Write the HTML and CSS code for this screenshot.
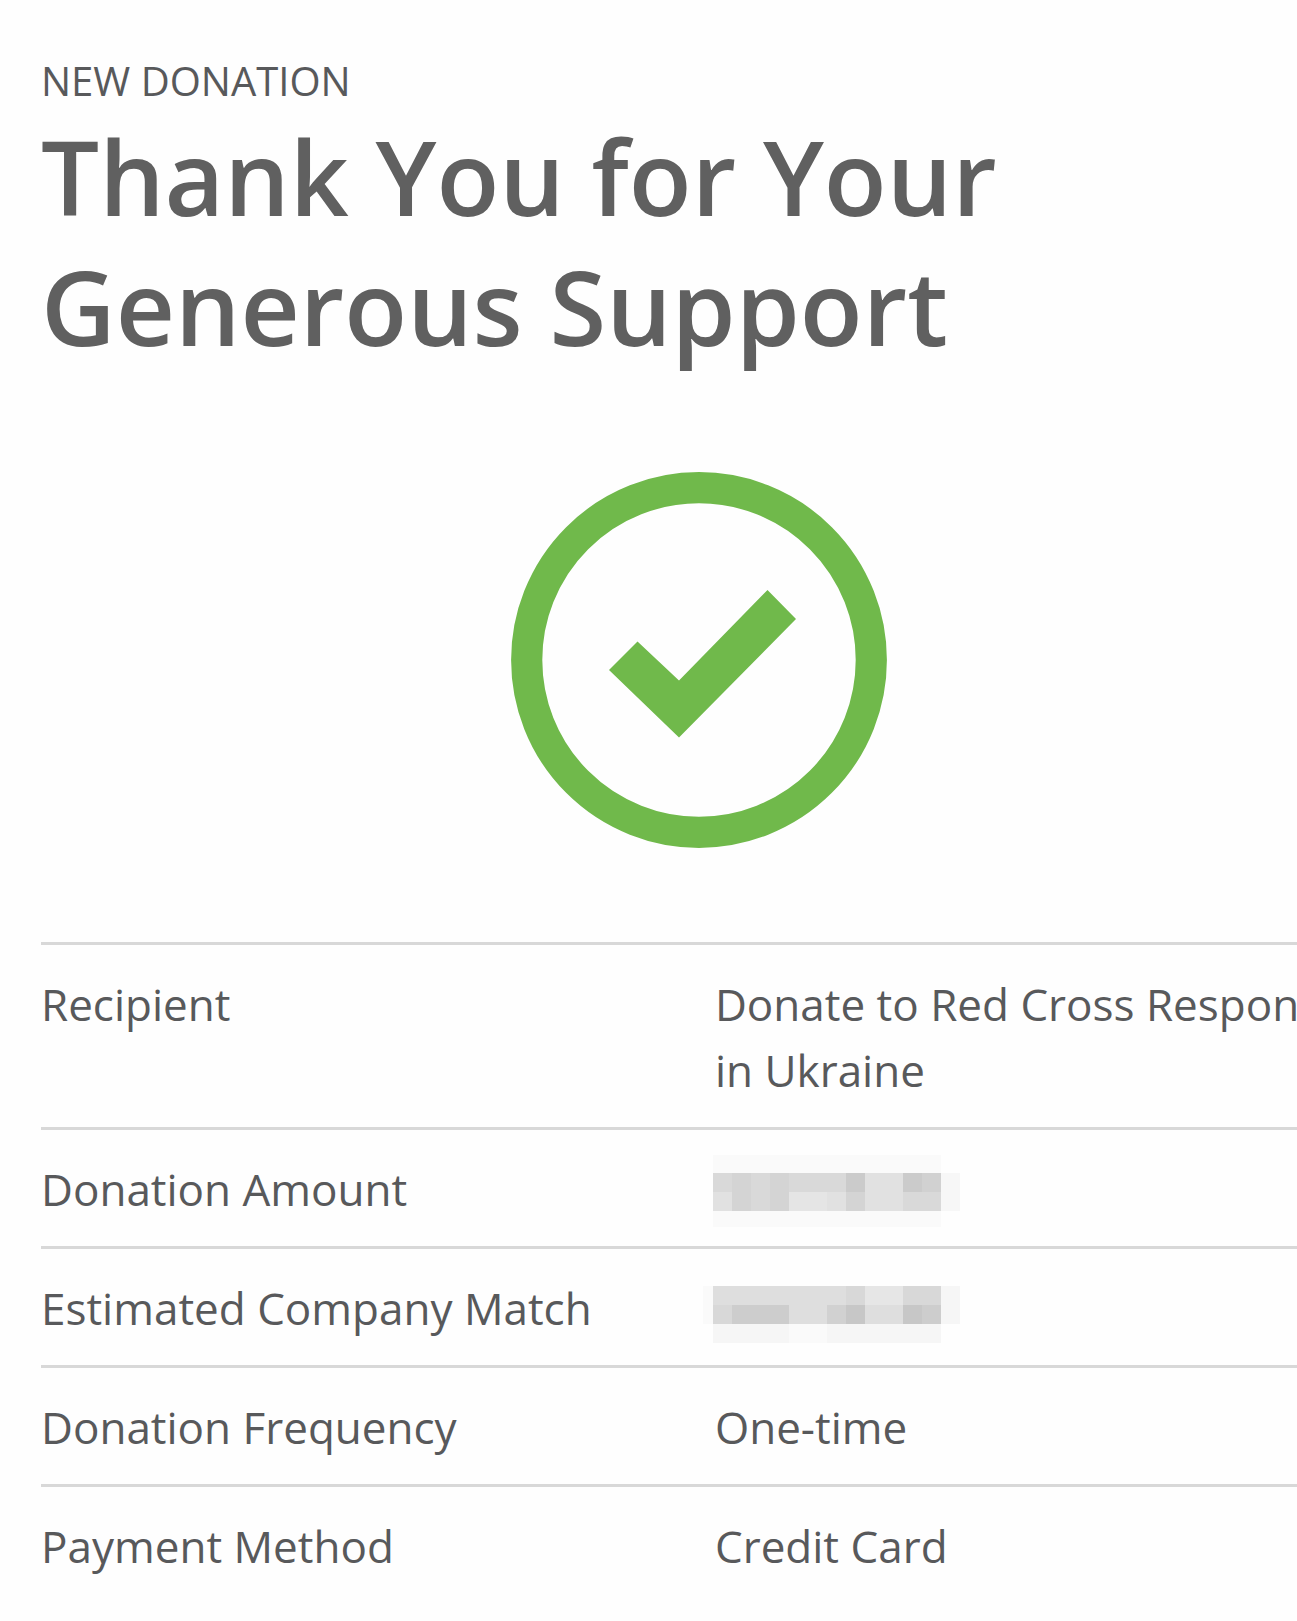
FILE: index.html
```html
<!DOCTYPE html>
<html lang="en">
<head>
<meta charset="utf-8">
<meta name="viewport" content="width=device-width, initial-scale=1">
<title>New Donation</title>
<link rel="stylesheet" href="styles.css">
</head>
<body>
<main class="receipt">
  <header class="receipt-header">
    <p class="eyebrow">NEW DONATION</p>
    <h1 class="title">Thank You for Your<br>Generous Support</h1>
  </header>
  <svg class="success-icon" viewBox="0 0 376 376" role="img" aria-label="Success">
    <circle cx="188" cy="188" r="172.3" fill="none" stroke="currentColor" stroke-width="31.2"/>
    <path fill="currentColor" d="M98 198 126.500 169.500 168 208.500 256.500 118 285 147 168 265.500Z"/>
  </svg>
  <table class="details">
    <tbody>
      <tr>
        <th scope="row">Recipient</th>
        <td>Donate to Red Cross Response in Ukraine</td>
      </tr>
      <tr>
        <th scope="row">Donation Amount</th>
        <td>
          <svg class="redacted" viewBox="0 0 247 66" role="img" aria-label="Hidden amount" shape-rendering="crispEdges">
            <path fill="#fafafa" d="M-2 -1H226V17H-2ZM-2 55H226V71H-2Z"/>
            <path fill="#f7f7f7" d="M226 17H245V55H226Z"/>
            <path fill="#d9d9d9" d="M-2 17H226V55H-2Z"/>
            <path fill="#e1e1e1" d="M-2 36H17V55H-2ZM112 36H131V55H112ZM150 17H188V55H150Z"/>
            <path fill="#e5e5e5" d="M74 36H112V55H74Z"/>
            <path fill="#d4d4d4" d="M17 17H36V55H17ZM55 17H74V55H55ZM131 36H150V55H131Z"/>
            <path fill="#cbcbcb" d="M131 17H150V36H131ZM188 17H207V36H188Z"/>
            <path fill="#d1d1d1" d="M207 17H226V36H207Z"/>
          </svg>
        </td>
      </tr>
      <tr>
        <th scope="row">Estimated Company Match</th>
        <td>
          <svg class="redacted" viewBox="0 0 247 66" role="img" aria-label="Hidden amount" shape-rendering="crispEdges">
            <path fill="#fafafa" d="M-12 11H-2V49H-12Z"/>
            <path fill="#f6f6f6" d="M-2 49H226V68H-2ZM226 11H245V49H226Z"/>
            <path fill="#fafafa" d="M74 49H112V68H74Z"/>
            <path fill="#dedede" d="M-2 11H226V49H-2Z"/>
            <path fill="#d8d8d8" d="M-2 30H17V49H-2ZM131 11H150V30H131ZM188 11H226V30H188Z"/>
            <path fill="#e6e6e6" d="M150 11H188V30H150Z"/>
            <path fill="#cdcdcd" d="M17 30H74V49H17ZM207 30H226V49H207Z"/>
            <path fill="#d1d1d1" d="M112 30H131V49H112Z"/>
            <path fill="#c7c7c7" d="M131 30H150V49H131ZM188 30H207V49H188Z"/>
          </svg>
        </td>
      </tr>
      <tr>
        <th scope="row">Donation Frequency</th>
        <td>One-time</td>
      </tr>
      <tr>
        <th scope="row">Payment Method</th>
        <td>Credit Card</td>
      </tr>
    </tbody>
  </table>
</main>
</body>
</html>
```
FILE: styles.css
```css
* {
  box-sizing: border-box;
}

body {
  margin: 0;
  overflow-x: hidden;
  background: #fefefe;
  color: #58595b;
  font-family: "Open Sans", "Noto Sans", sans-serif;
}

/* The receipt runs past the right edge of the window. */
.receipt {
  margin-right: -59px;
  padding: 55px 0 0 41px;
}

.eyebrow {
  margin: 0 0 4px;
  font-size: 40px;
  line-height: 52px;
}

.title {
  margin: 0;
  color: #606060;
  font-size: 103px;
  font-weight: 600;
  line-height: 130px;
}

.success-icon {
  display: block;
  width: 376px;
  height: 376px;
  margin: 101px auto 94px;
  color: #70b94b;
}

.details {
  width: 100%;
  border-collapse: separate;
  border-spacing: 0;
  table-layout: fixed;
  font-size: 44px;
  line-height: 66px;
}

.details th,
.details td {
  padding: 26px 0 24px;
  border-top: 3px solid #d8d8d8;
  font-weight: 400;
  text-align: left;
  vertical-align: top;
}

.details th {
  width: 51.25%;
}

.redacted {
  display: block;
  width: 247px;
  height: 66px;
  overflow: visible;
}
```
